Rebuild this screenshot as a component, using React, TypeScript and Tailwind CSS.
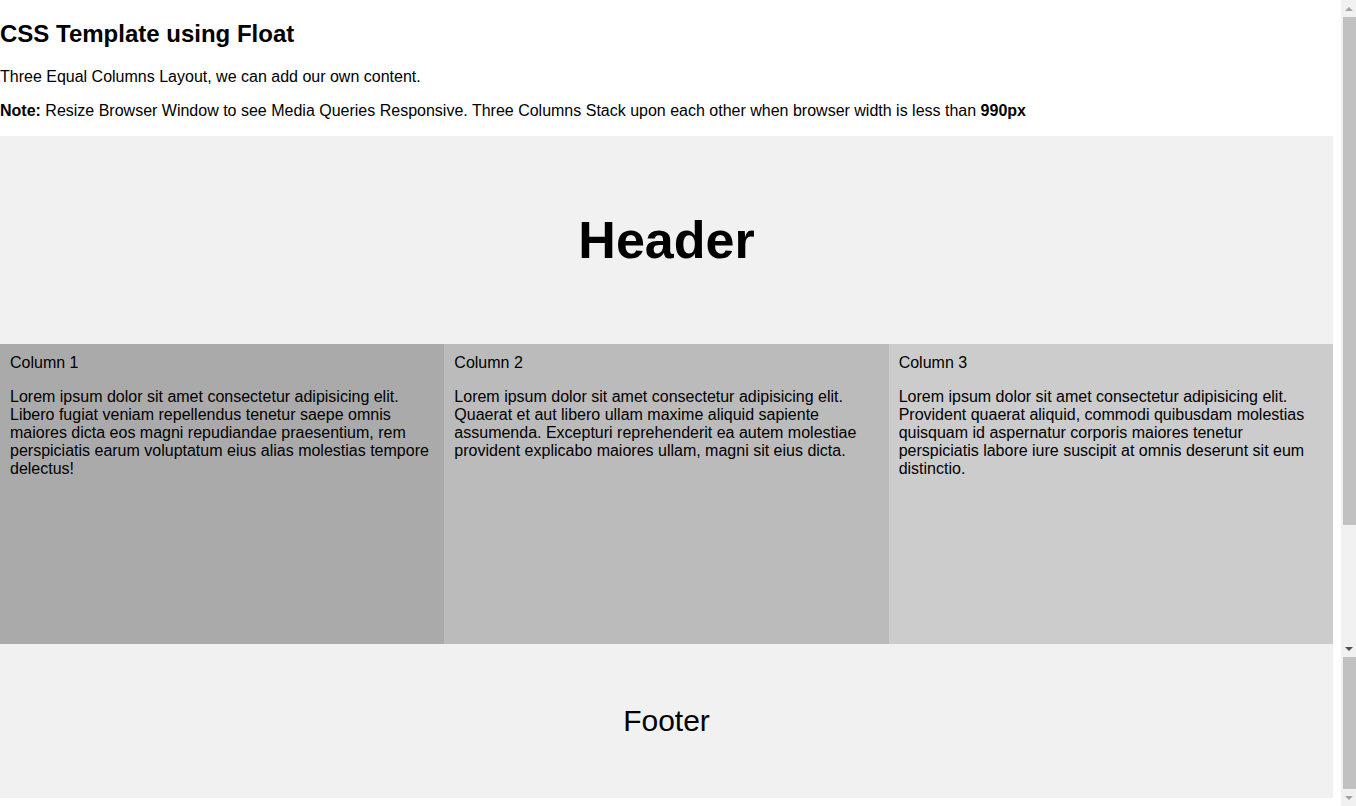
const columns = [
  {
    title: "Column 1",
    bg: "bg-[#aaaaaa]",
    text: "Lorem ipsum dolor sit amet consectetur adipisicing elit. Libero fugiat veniam repellendus tenetur saepe omnis maiores dicta eos magni repudiandae praesentium, rem perspiciatis earum voluptatum eius alias molestias tempore delectus!",
  },
  {
    title: "Column 2",
    bg: "bg-[#bbbbbb]",
    text: "Lorem ipsum dolor sit amet consectetur adipisicing elit. Quaerat et aut libero ullam maxime aliquid sapiente assumenda. Excepturi reprehenderit ea autem molestiae provident explicabo maiores ullam, magni sit eius dicta.",
  },
  {
    title: "Column 3",
    bg: "bg-[#cccccc]",
    text: "Lorem ipsum dolor sit amet consectetur adipisicing elit. Provident quaerat aliquid, commodi quibusdam molestias quisquam id aspernatur corporis maiores tenetur perspiciatis labore iure suscipit at omnis deserunt sit eum distinctio.",
  },
];

// fake browser scrollbar strip on the right edge
const Scrollbar = () => (
  <div className="flex h-full w-[15px] flex-col bg-[#f1f1f1]">
    <div className="flex h-[17px] items-center justify-center">
      <div className="h-0 w-0 border-x-[4px] border-b-[4px] border-x-transparent border-b-[#a3a3a3]" />
    </div>
    <div className="ml-[2px] h-[508px] bg-[#c1c1c1]" />
    <div className="h-[118px]" />
    <div className="flex h-[12px] items-center justify-center">
      <div className="h-0 w-0 border-x-[4px] border-t-[4px] border-x-transparent border-t-[#505050]" />
    </div>
    <div className="h-[2px]" />
    <div className="ml-[2px] h-[132px] bg-[#c1c1c1]" />
    <div className="flex h-[17px] items-center justify-center">
      <div className="h-0 w-0 border-x-[4px] border-t-[4px] border-x-transparent border-t-[#a3a3a3]" />
    </div>
  </div>
);

export default function App() {
  return (
    <div
      className="flex h-[806px] w-[1356px] overflow-hidden bg-white text-black"
      style={{ fontFamily: '"Liberation Sans", Arial, sans-serif' }}
    >
      <div className="w-[1333px]">
        <h2 className="my-[20px] text-[24px] font-bold leading-[normal]">
          CSS Template using Float
        </h2>
        <p className="my-4 text-[16px] leading-[normal]">
          Three Equal Columns Layout, we can add our own content.
        </p>
        <p className="my-4 text-[16px] leading-[normal]">
          <b>Note:</b> Resize Browser Window to see Media Queries Responsive.
          Three Columns Stack upon each other when browser width is less than{" "}
          <b>990px</b>
        </p>

        <header className="flex h-[208px] items-center justify-center bg-[#f1f1f1]">
          <h1 className="text-[52px] font-bold leading-[normal]">Header</h1>
        </header>

        <section className="grid h-[300px] grid-cols-3">
          {columns.map((col) => (
            <div key={col.title} className={`${col.bg} p-[10px]`}>
              <div className="text-[16px] leading-[normal]">{col.title}</div>
              <p className="mt-4 text-[16px] leading-[normal]">{col.text}</p>
            </div>
          ))}
        </section>

        <footer className="flex h-[154px] items-center justify-center bg-[#f1f1f1]">
          <p className="text-[30px] leading-[normal]">Footer</p>
        </footer>
      </div>
      <div className="w-[8px]" />
      <Scrollbar />
    </div>
  );
}
